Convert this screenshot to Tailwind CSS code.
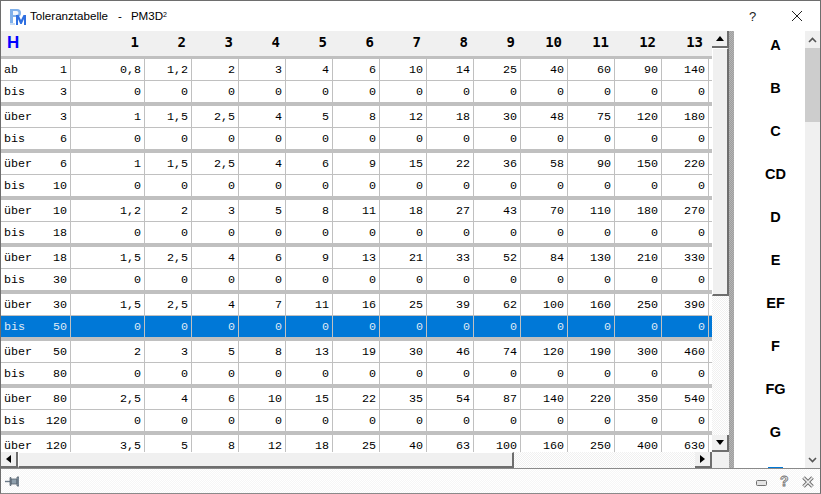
<!DOCTYPE html>
<html lang="de">
<head>
  <meta charset="UTF-8">
  <title>Toleranztabelle</title>
  <script src="https://cdn.jsdelivr.net/npm/@tailwindcss/browser@4"></script>
</head>
<body class="bg-white overflow-hidden">
  <div id="win" class="w-[821px] h-[494px] flex flex-col border border-[#6e6e6e] border-b-[#8a8a8a] bg-white font-['Liberation_Sans',sans-serif] overflow-hidden">
    <!-- Title bar -->
    <div class="h-[30px] flex items-center shrink-0 relative">
      <svg class="ml-[8px] w-[18px] h-[17px]" viewBox="0 0 18 17">
        <path d="M1 15V1h7a4 4 0 0 1 0 8H4v6z" fill="#7fb0ea"/>
        <path d="M4 3v4h3.5a2 2 0 0 0 0-4z" fill="#f2f7fd"/>
        <path d="M1 15h5v2H1z" fill="#c9dcf3"/>
        <path d="M7 17V7h2.5L12 12l2.5-5H17v10h-2v-6l-2.300 5h-1.400L9 11v6z" fill="#2f6fe0"/>
      </svg>
      <span class="ml-[3px] text-[11.6px] text-black">Toleranztabelle</span>
      <span class="ml-[10px] text-[11.6px] text-black">-</span>
      <span class="ml-[9px] text-[11.6px] text-black">PM3D<sup class="text-[7px]">2</sup></span>
      <span class="absolute left-[748px] top-[6px] text-[13px] text-[#222]">?</span>
      <svg class="absolute left-[790px] top-[9px] w-[12px] h-[12px]" viewBox="0 0 12 12"><path d="M1 1l10 10M11 1L1 11" stroke="#222" stroke-width="1" fill="none"/></svg>
    </div>

    <div class="flex h-[437px] shrink-0">
      <!-- Table with scrollbars -->
      <div class="w-[728px] shrink-0 flex flex-col">
        <div class="flex h-[421px]">
          <div class="w-[711px] overflow-hidden" id="table"></div>
          <!-- vertical scrollbar -->
          <div class="w-[17px] flex flex-col bg-[repeating-conic-gradient(#f0f0f0_0_25%,#ffffff_0_50%)] bg-size-[2px_2px]">
            <div class="h-[17px] flex items-center justify-center bg-[#f0f0f0] border-b-2 border-r-2 border-[#6e6e6e]">
              <svg class="w-[8px] h-[5px]" viewBox="0 0 8 5"><path d="M4 0l4 5H0z" fill="#000"/></svg>
            </div>
            <div class="h-[248px] bg-[#f0f0f0] border-t border-l border-t-white border-l-white border-b-2 border-r-2 border-b-[#6e6e6e] border-r-[#6e6e6e]"></div>
            <div class="flex-1"></div>
            <div class="h-[17px] flex items-center justify-center bg-[#f0f0f0] border-b-2 border-r-2 border-[#6e6e6e]">
              <svg class="w-[8px] h-[5px]" viewBox="0 0 8 5"><path d="M0 0h8L4 5z" fill="#000"/></svg>
            </div>
          </div>
        </div>
        <!-- horizontal scrollbar -->
        <div class="h-[16px] flex bg-[repeating-conic-gradient(#f0f0f0_0_25%,#ffffff_0_50%)] bg-size-[2px_2px]">
          <div class="w-[17px] flex items-center justify-center bg-[#f0f0f0] border-b-2 border-r-2 border-[#6e6e6e]">
            <svg class="w-[5px] h-[8px]" viewBox="0 0 5 8"><path d="M5 0v8L0 4z" fill="#000"/></svg>
          </div>
          <div class="w-[496px] bg-[#f0f0f0] border-t border-l border-t-white border-l-white border-b-2 border-r-2 border-b-[#6e6e6e] border-r-[#6e6e6e]"></div>
          <div class="flex-1"></div>
          <div class="w-[17px] flex items-center justify-center bg-[#f0f0f0] border-b-2 border-r-2 border-[#6e6e6e]">
            <svg class="w-[5px] h-[8px]" viewBox="0 0 5 8"><path d="M0 0l5 4-5 4z" fill="#000"/></svg>
          </div>
          <div class="w-[17px] bg-[#f0f0f0]"></div>
        </div>
      </div>

      <!-- Splitter -->
      <div class="w-[5px] shrink-0 bg-[repeating-conic-gradient(#a0a0a0_0_25%,#b4b4b4_0_50%)] bg-size-[2px_2px]"></div>

      <!-- Letter list -->
      <div class="w-[71px] shrink-0 overflow-hidden font-bold text-[14.5px] text-black text-center pl-[12px]">
        <div class="h-[36px] leading-[29px]">A</div>
        <div class="h-[43px] leading-[43px]">B</div>
        <div class="h-[43px] leading-[43px]">C</div>
        <div class="h-[43px] leading-[43px]">CD</div>
        <div class="h-[43px] leading-[43px]">D</div>
        <div class="h-[43px] leading-[43px]">E</div>
        <div class="h-[43px] leading-[43px]">EF</div>
        <div class="h-[43px] leading-[43px]">F</div>
        <div class="h-[43px] leading-[43px]">FG</div>
        <div class="h-[43px] leading-[43px]">G</div>
        <div class="w-[15px] mt-[13px] mx-auto border-t border-[#0078d7]"></div>
      </div>

      <!-- List scrollbar -->
      <div class="w-[15px] shrink-0 flex flex-col bg-[#f0f0f0]">
        <div class="h-[17px] flex items-center justify-center">
          <svg class="w-[9px] h-[6px]" viewBox="0 0 9 6"><path d="M1 5l3.500-3.500L8 5" stroke="#555" stroke-width="1.6" fill="none"/></svg>
        </div>
        <div class="h-[74px] bg-[#cdcdcd]"></div>
        <div class="flex-1"></div>
        <div class="h-[17px] flex items-center justify-center">
          <svg class="w-[9px] h-[6px]" viewBox="0 0 9 6"><path d="M1 1l3.500 3.500L8 1" stroke="#555" stroke-width="1.6" fill="none"/></svg>
        </div>
      </div>
    </div>

    <!-- Bottom bar -->
    <div class="flex-1 bg-[repeating-conic-gradient(#f6f6f6_0_25%,#ffffff_0_50%)] bg-size-[2px_2px] border-t border-[#8a8a8a] flex items-center relative">
      <svg class="ml-[4px] w-[14px] h-[11px]" viewBox="0 0 14 11">
        <path d="M0 5.500h5" stroke="#6b7a88" stroke-width="1.4" fill="none"/>
        <path d="M5 1.500h1v8H5zM6 3h6v5H6zM12 1h2v9h-2z" fill="#8fa0ad" stroke="#56636e" stroke-width="0.8"/>
      </svg>
      <svg class="absolute left-[755px] top-[11px] w-[11px] h-[6px]" viewBox="0 0 11 6"><rect x="0.5" y="0.5" width="10" height="5" rx="1" fill="#e4e4e4" stroke="#707070"/></svg>
      <span class="absolute left-[779px] top-[3px] text-[14px] leading-[18px] font-bold text-[#eeeeee] [-webkit-text-stroke:0.8px_#707070]">?</span>
      <svg class="absolute left-[801px] top-[7px] w-[12px] h-[12px]" viewBox="0 0 12 12"><path d="M1.500 1.500l9 9M10.500 1.500l-9 9" stroke="#707070" stroke-width="3.6" fill="none"/><path d="M1.500 1.500l9 9M10.500 1.500l-9 9" stroke="#eeeeee" stroke-width="1.6" fill="none"/></svg>
    </div>
  </div>

  <script>
    const monoFont = "font-['Liberation_Mono',monospace]";
    const headFont = "font-['DejaVu_Sans_Mono',monospace]";
    const table = document.getElementById('table');
    const rows = [
      ['ab', 1, 3, ['0,8','1,2',2,3,4,6,10,14,25,40,60,90,140]],
      ['über', 3, 6, [1,'1,5','2,5',4,5,8,12,18,30,48,75,120,180]],
      ['über', 6, 10, [1,'1,5','2,5',4,6,9,15,22,36,58,90,150,220]],
      ['über', 10, 18, ['1,2',2,3,5,8,11,18,27,43,70,110,180,270]],
      ['über', 18, 30, ['1,5','2,5',4,6,9,13,21,33,52,84,130,210,330]],
      ['über', 30, 50, ['1,5','2,5',4,7,11,16,25,39,62,100,160,250,390]],
      ['über', 50, 80, [2,3,5,8,13,19,30,46,74,120,190,300,460]],
      ['über', 80, 120, ['2,5',4,6,10,15,22,35,54,87,140,220,350,540]],
      ['über', 120, 180, ['3,5',5,8,12,18,25,40,63,100,160,250,400,630]]
    ];

    function makeRow(label, num, values, selected) {
      const cls = selected ? 'bg-[#0078d7] text-[#dfe9f5]' : 'bg-white text-black';
      let html = `<div class="flex h-[22px] border-b border-[#c0c0c0] text-[11.7px] leading-[22px] ${cls} ${monoFont}">`;
      html += `<div class="w-[70px] shrink-0 flex justify-between px-[3px] border-r border-[#c0c0c0]"><span>${label}</span><span>${num}</span></div>`;
      html += `<div class="w-[74px] shrink-0 text-right pr-[3px] border-r border-[#c0c0c0]">${values[0]}</div>`;
      values.slice(1).forEach(v => {
        html += `<div class="w-[47px] shrink-0 text-right pr-[3px] border-r border-[#c0c0c0]">${v}</div>`;
      });
      return html + '</div>';
    }

    // header row
    let out = `<div class="flex h-[25px] pb-[2px] bg-[#f0f0f0] items-center font-bold text-[14px] text-black ${headFont}">`;
    out += `<div class="w-[70px] shrink-0 pl-[6px] text-[#0000ff] text-[17px] font-['Liberation_Sans',sans-serif]">H</div><div class="w-[74px] shrink-0 text-right pr-[6px]">1</div>`;
    for (let i = 2; i <= 13; i++) out += `<div class="w-[47px] shrink-0 text-right pr-[6px]">${i}</div>`;
    out += '</div>';
    rows.forEach((r, i) => {
      out += '<div class="h-[3px] bg-[#c0c0c0]"></div>';
      out += makeRow(r[0], r[1], r[3], false);
      // last group: only the first row is in view
      if (i < rows.length - 1) out += makeRow('bis', r[2], r[3].map(() => 0), i === 5);
    });
    table.innerHTML = out;
  </script>
</body>
</html>
